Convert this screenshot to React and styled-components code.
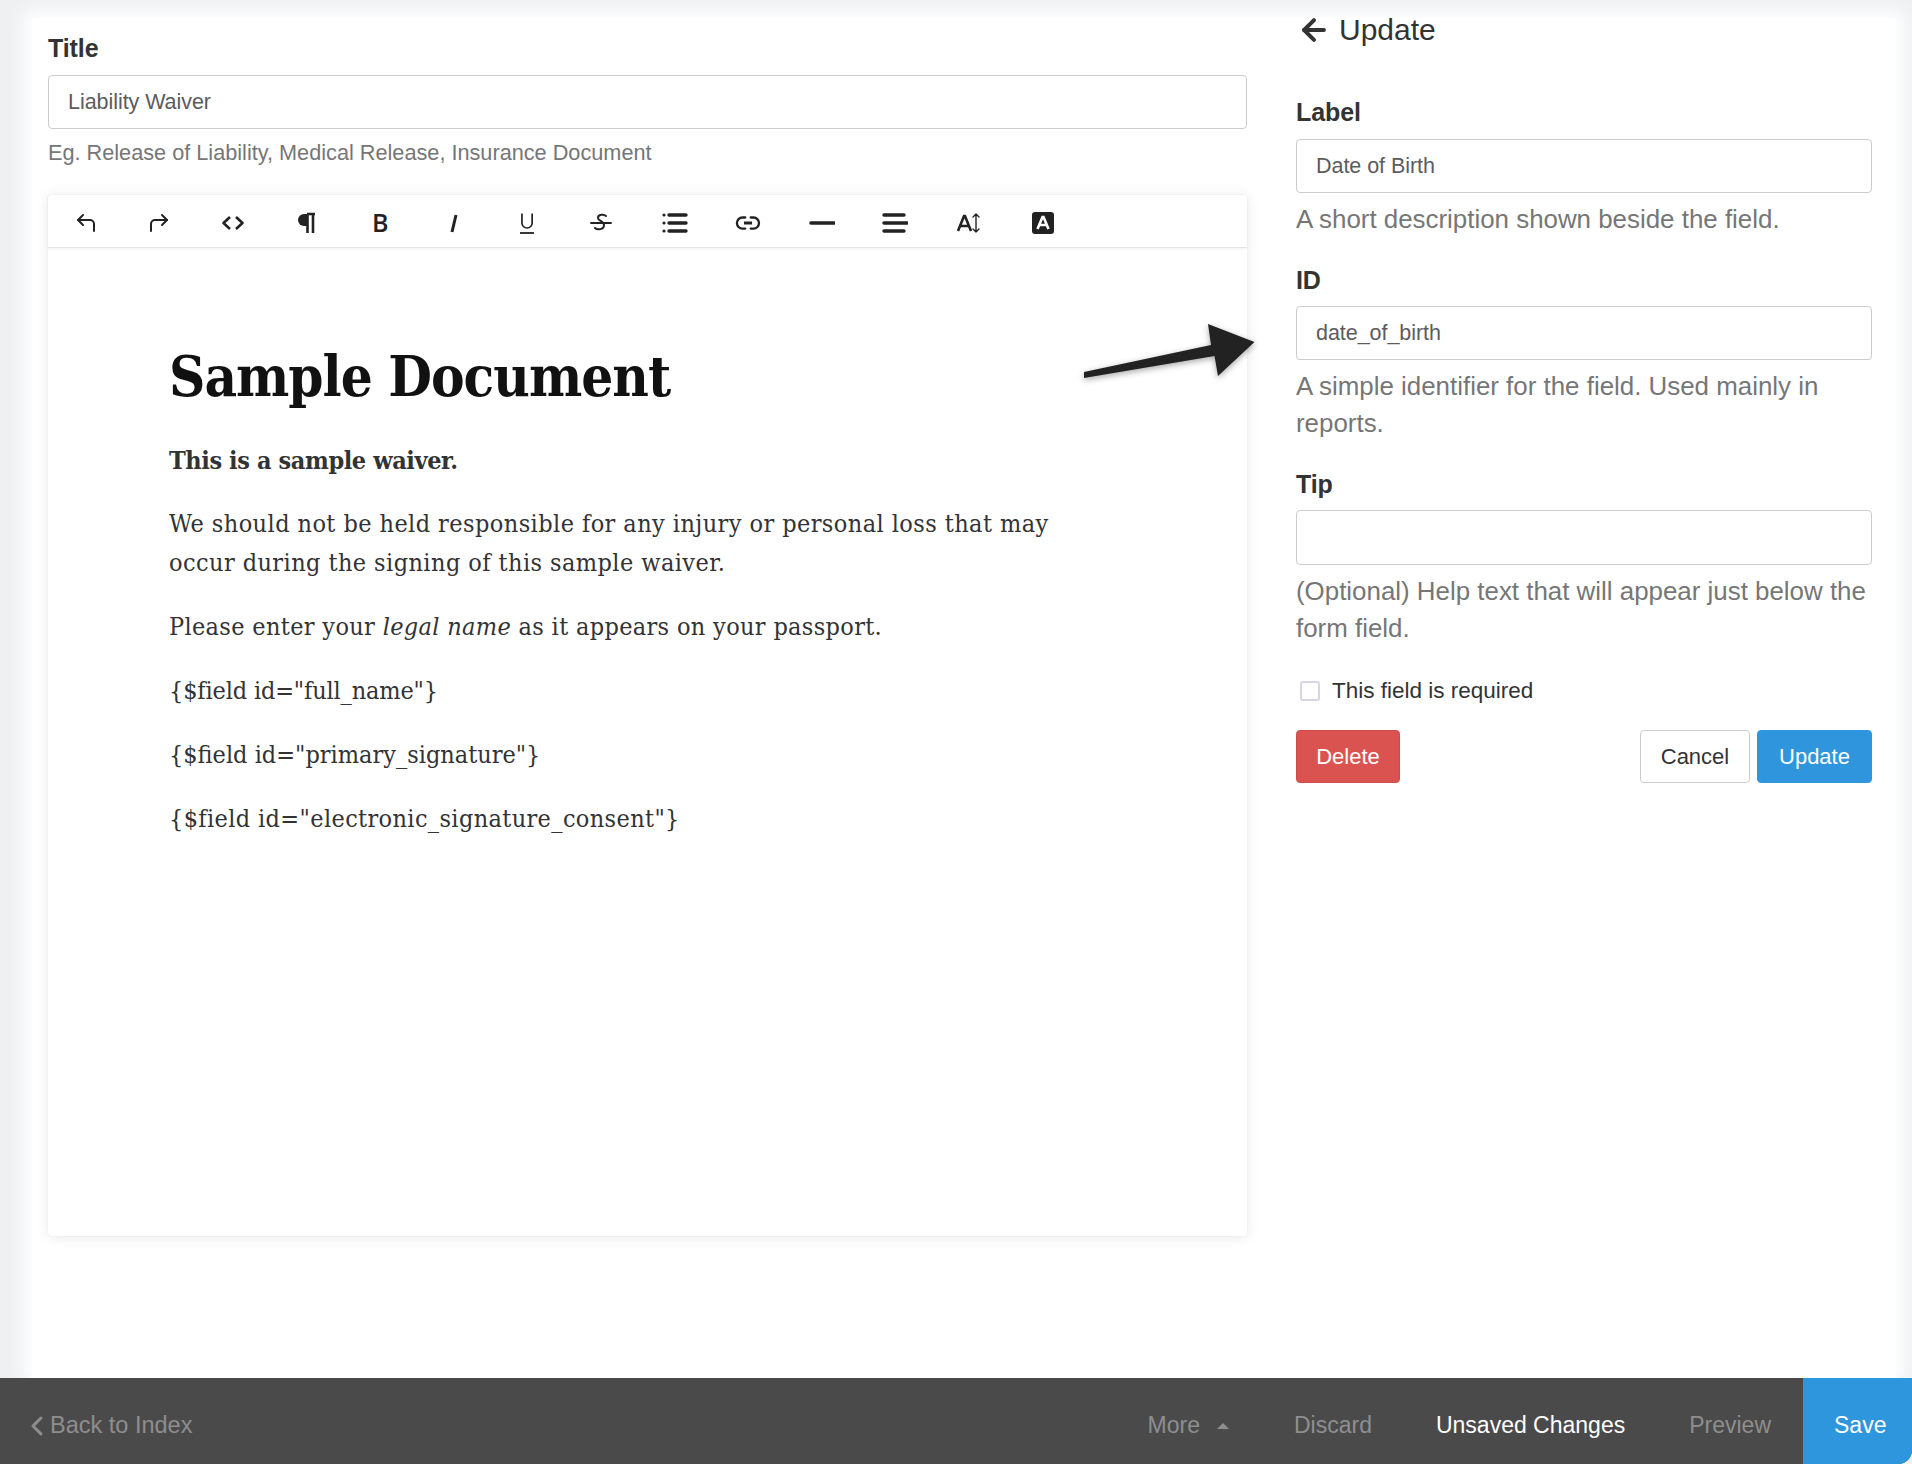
import React from "react";
import styled, { createGlobalStyle } from "styled-components";
import { CornerUpLeft, CornerUpRight, ArrowLeft, ChevronLeft } from "lucide-react";

const Global = createGlobalStyle`
  html, body { margin: 0; padding: 0; background: #eef0f2; }
  * { box-sizing: border-box; }
`;
const Page = styled.div`
  position: relative; width: 1912px; height: 1464px; overflow: hidden;
  display: flex; flex-direction: column; background: #eef0f2;
  font-family: "Liberation Sans", Arial, sans-serif; color: #333;
`;
const Canvas = styled.main`
  flex: 1; min-height: 0; margin: 18px 16px 0 32px; background: #fff;
  box-shadow: 0 0 16px 8px #fff;
  display: grid; grid-template-columns: 1199px 576px; column-gap: 49px; padding-left: 16px; align-items: start;
`;
const LeftCol = styled.section` padding-top: 14px; `;
const RightCol = styled.aside` display: flex; flex-direction: column; `;
const FieldLabel = styled.label`
  display: block; font-size: 25px; line-height: 32px; font-weight: 700; color: #333; letter-spacing: -0.1px;
`;
const TextBox = styled.div`
  height: ${p => p.$h || 54}px; margin-top: ${p => p.$mt ?? 11}px; border: 1px solid #ccc; border-radius: 4px; background: #fff;
  padding: 1px 19px 0; display: flex; align-items: center; font-size: 21.5px; color: #5c5c5c; letter-spacing: -0.05px;
`;
const SmallHint = styled.p`
  margin: 9px 0 0; font-size: 21.7px; line-height: 30px; color: #767676;
`;
const LongHint = styled.p`
  margin: 8px 0 0; font-size: 25.9px; line-height: 37px; color: #767676;
`;
const Group = styled.div` margin-top: ${p => p.$mt}px; `;
const EditorCard = styled.div`
  margin-top: 27px; height: 1041px; background: #fff; border-radius: 3px;
  box-shadow: 0 1px 14px rgba(0,0,0,.09), 0 0 1px rgba(0,0,0,.12);
`;
const Toolbar = styled.div`
  height: 53px; display: flex; align-items: center; padding: 3px 0 0 1px; border-bottom: 1px solid #e4e4e8;
  box-shadow: 0 1px 3px rgba(0,0,0,.05);
`;
const ToolButton = styled.span`
  width: 73.6px; height: 100%; display: flex; align-items: center; justify-content: center; color: #222;
  font-family: "Open Sans", sans-serif; font-size: 25px; font-weight: 600; line-height: 1;
`;
const Doc = styled.article`
  padding: 98px 0 0 121px; width: 1010px;
  font-family: "DejaVu Serif Condensed", "DejaVu Serif", serif; font-stretch: condensed; font-size: 25px; line-height: 39px; color: #333;
`;
const DocTitle = styled.h1`
  margin: 0 0 35px; font-family: "DejaVu Serif Condensed", "DejaVu Serif", serif; font-stretch: condensed; font-size: 56px; line-height: 60px; font-weight: 700;
  color: #111; white-space: nowrap; letter-spacing: -1px;
`;
const DocPara = styled.p` margin: 0 0 ${p => p.$mb ?? 25}px; letter-spacing: ${p => p.$ls ?? 0}px; `;
const PanelHead = styled.h2`
  margin: 0 0 0 1px; height: 24px; display: flex; align-items: center; gap: 8px; font-size: 30px; font-weight: 400; color: #333;
`;
const FirstGroup = styled.div` margin-top: 54px; `;
const CheckRow = styled.div`
  margin-top: 27px; height: 34px; padding-left: 4px; display: flex; align-items: center; gap: 12px; font-size: 22.5px; color: #333;
`;
const CheckBox = styled.span`
  width: 20px; height: 20px; border: 2px solid #d6d6e4; border-radius: 3px; background: #fff;
`;
const Actions = styled.div` margin-top: 22px; display: flex; align-items: stretch; gap: 7px; `;
const Btn = styled.button`
  height: 53px; width: ${p => p.$w}px; border-radius: 4px; font: 22px "Liberation Sans", Arial, sans-serif; padding: 0;
  border: 1px solid ${p => p.$border}; background: ${p => p.$bg}; color: ${p => p.$fg};
  margin-left: ${p => p.$auto ? "auto" : "0"};
`;
const Footer = styled.footer`
  height: 86px; flex: none; background: #4a4a4a; display: flex; align-items: center; font-size: 23px; color: #8e8e8e;
  position: relative; z-index: 1; overflow: hidden; border-bottom-right-radius: 14px;
`;
const Back = styled.span` display: flex; align-items: center; margin: 9px 0 0 21px; font-size: 23.5px; `;
const BackIcon = styled(ChevronLeft)` margin-right: -3px; `;
const FooterNav = styled.nav` margin-left: auto; display: flex; align-items: center; height: 100%; `;
const NavItem = styled.span`
  margin: 9px ${p => p.$gap}px 0 0; color: ${p => p.$on ? "#fff" : "#8e8e8e"}; display: flex; align-items: center;
`;
const Caret = styled.i`
  margin-left: 17px; width: 0; height: 0; border-left: 6px solid transparent; border-right: 6px solid transparent; border-bottom: 6px solid #8e8e8e;
`;
const Save = styled.span`
  height: 100%; width: 109px; background: #2d96dd; color: #fff; display: flex; align-items: center; padding: 9px 0 0 31px;
`;
const ArrowOverlay = styled.svg`
  position: absolute; left: 1080px; top: 318px; filter: drop-shadow(0 2px 3px rgba(0,0,0,.35));
`;

const stroke = { fill: "none", stroke: "currentColor", strokeWidth: 2.3, strokeLinecap: "round", strokeLinejoin: "round" };
const Ico = ({ children, w = 26, h = 24 }) => <svg width={w} height={h} viewBox={`0 0 ${w} ${h}`}>{children}</svg>;

const tools = [
  <CornerUpLeft size={24} strokeWidth={2} />,
  <CornerUpRight size={24} strokeWidth={2} />,
  <Ico><path d="M10 6 3.500 12 10 18M16 6l6.500 6-6.500 6" {...stroke} strokeWidth={2.6} strokeLinecap="butt" /></Ico>,
  <Ico><path d="M13 3h-3a6 6 0 0 0 0 12h3z" fill="currentColor" /><path d="M13 3h8M13.500 3v19M19 3v19" {...stroke} strokeWidth={2.6} strokeLinecap="butt" /></Ico>,
  "B",
  <Ico><path d="M15 4 11 21" {...stroke} strokeWidth={3} strokeLinecap="butt" /></Ico>,
  <Ico><path d="M7 3v11a6 6 0 0 0 12 0V3" {...stroke} strokeWidth={2} strokeLinecap="butt" transform="matrix(.85 0 0 .85 2 0)" /><path d="M6 22h14" {...stroke} strokeWidth={1.8} strokeLinecap="butt" /></Ico>,
  <Ico><path d="M18 5c-2-2-8-2-8 2 0 3 6 3 6 7 0 5-7 5-9 3" {...stroke} strokeWidth={2} /><path d="M3 12h20" {...stroke} strokeWidth={1.8} /></Ico>,
  <Ico><circle cx="2" cy="4" r="1.6" fill="currentColor" /><circle cx="2" cy="12" r="1.6" fill="currentColor" /><circle cx="2" cy="20" r="1.6" fill="currentColor" /><path d="M7 4h17M7 12h17M7 20h17" {...stroke} strokeWidth={3.4} /></Ico>,
  <Ico><path d="M10 6H7a6 6 0 0 0 0 12h3M16 6h3a6 6 0 0 1 0 12h-3" {...stroke} strokeWidth={2.5} transform="matrix(.92 0 0 .92 1 1)" /><path d="M9 12h8" {...stroke} strokeWidth={3} strokeLinecap="butt" /></Ico>,
  <Ico><path d="M2 12h23" {...stroke} strokeWidth={3.6} /></Ico>,
  <Ico><path d="M2 4h20M2 12h23M2 20h20" {...stroke} strokeWidth={3.4} /></Ico>,
  <Ico w={26} h={24}><path d="M2 20 8 5h1l6 15M4.500 15h9" {...stroke} strokeWidth={2.6} strokeLinecap="butt" strokeLinejoin="miter" /><path d="M20 3v18M17 6l3-3 3 3M17 18l3 3 3-3" {...stroke} strokeWidth={1.4} /></Ico>,
  <Ico><rect x="2" y="1" width="22" height="22" rx="3" fill="currentColor" /><path d="M7.500 18 12.500 6h1l5 12M9.500 14h7" fill="none" stroke="#fff" strokeWidth={2.6} /></Ico>,
];

export default function App() {
  return (
    <Page>
      <Global />
      <Canvas>
        <LeftCol>
          <FieldLabel>Title</FieldLabel>
          <TextBox>Liability Waiver</TextBox>
          <SmallHint>Eg. Release of Liability, Medical Release, Insurance Document</SmallHint>
          <EditorCard>
            <Toolbar>
              {tools.map((t, i) => <ToolButton key={i}>{t}</ToolButton>)}
            </Toolbar>
            <Doc>
              <DocTitle>Sample Document</DocTitle>
              <DocPara $mb={24} $ls={-0.4}><strong>This is a sample waiver.</strong></DocPara>
              <DocPara $ls={0.42}>We should not be held responsible for any injury or personal loss that may occur during the signing of this sample waiver.</DocPara>
              <DocPara $ls={0.33}>Please enter your <em>legal name</em> as it appears on your passport.</DocPara>
              <DocPara $ls={-0.16}>{'{$field id="full_name"}'}</DocPara>
              <DocPara>{'{$field id="primary_signature"}'}</DocPara>
              <DocPara $ls={0.36}>{'{$field id="electronic_signature_consent"}'}</DocPara>
            </Doc>
          </EditorCard>
        </LeftCol>
        <RightCol>
          <PanelHead><ArrowLeft size={34} strokeWidth={2.8} />Update</PanelHead>
          <FirstGroup>
            <FieldLabel>Label</FieldLabel>
            <TextBox>Date of Birth</TextBox>
            <LongHint>A short description shown beside the field.</LongHint>
          </FirstGroup>
          <Group $mt={26}>
            <FieldLabel>ID</FieldLabel>
            <TextBox $mt={10}>date_of_birth</TextBox>
            <LongHint>A simple identifier for the field. Used mainly in reports.</LongHint>
          </Group>
          <Group $mt={26}>
            <FieldLabel>Tip</FieldLabel>
            <TextBox $mt={10} $h={55} />
            <LongHint>(Optional) Help text that will appear just below the form field.</LongHint>
          </Group>
          <CheckRow><CheckBox />This field is required</CheckRow>
          <Actions>
            <Btn $w={104} $bg="#db5350" $border="#d04a47" $fg="#fff">Delete</Btn>
            <Btn $w={110} $auto $bg="#fff" $border="#ccc" $fg="#333">Cancel</Btn>
            <Btn $w={115} $bg="#2f96dd" $border="#2f96dd" $fg="#fff">Update</Btn>
          </Actions>
        </RightCol>
      </Canvas>
      <Footer>
        <Back><BackIcon size={32} strokeWidth={2.2} />Back to Index</Back>
        <FooterNav>
          <NavItem $gap={65}>More<Caret /></NavItem>
          <NavItem $gap={64}>Discard</NavItem>
          <NavItem $gap={64} $on>Unsaved Changes</NavItem>
          <NavItem $gap={32}>Preview</NavItem>
          <Save>Save</Save>
        </FooterNav>
      </Footer>
      <ArrowOverlay width="180" height="64" viewBox="0 0 180 64">
        <path d="M4 54 131 27 128 6 174.500 24 138 58 134.500 38 4 60Z" fill="#222" />
      </ArrowOverlay>
    </Page>
  );
}
